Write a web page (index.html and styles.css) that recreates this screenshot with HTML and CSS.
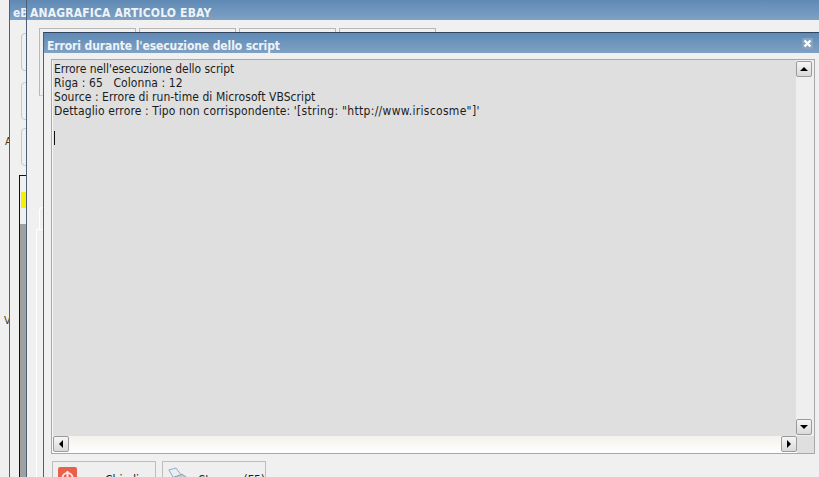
FILE: index.html
```html
<!DOCTYPE html>
<html lang="en">
<head>
    <meta charset="UTF-8">
    <title>Errori durante l'esecuzione dello script</title>
    <link rel="stylesheet" href="styles.css">
</head>
<body>
    <!-- etichette della finestra sotto, tagliate dalle altre -->
    <div class="back-label bl1">A</div>
    <div class="back-label bl2">V</div>

    <!-- finestra dietro -->
    <div class="window win-back">
        <div class="titlebar">eB</div>
        <div class="back-btn bb1"></div>
        <div class="back-btn bb2"></div>
        <div class="back-btn bb3"></div>
        <div class="back-grid">
            <div class="grid-row first"></div>
            <div class="grid-row yellow"></div>
            <div class="grid-row"></div>
        </div>
    </div>

    <!-- anagrafica -->
    <div class="window win-main">
        <div class="titlebar main-title">ANAGRAFICA ARTICOLO EBAY</div>
        <div class="tab t1"></div>
        <div class="tab t2"></div>
        <div class="tab t3"></div>
        <div class="tab t4"></div>
        <div class="panel-curve"></div>
        <div class="panel-line"></div>
    </div>

    <!-- dialogo errori -->
    <div class="window win-dialog">
        <div class="titlebar dialog-title">
            <span>Errori durante l'esecuzione dello script</span>
            <svg class="close" width="11" height="11" viewBox="0 0 11 11"><rect width="11" height="11" rx="1" fill="#86a3c2"/><path d="M2.5 2.5l6 6M8.5 2.5l-6 6" stroke="#fff" stroke-width="2.4"/></svg>
        </div>
        <div class="memo">
            <div class="memo-body">
                <div class="memo-text">
                    <p class="l1">Errore nell'esecuzione dello script</p>
                    <p class="l2">Riga : 65&nbsp;&nbsp; Colonna : 12</p>
                    <p class="l3">Source : Errore di run-time di Microsoft VBScript</p>
                    <p class="l4">Dettaglio errore : Tipo non corrispondente: <span class="l4-value">'[string: "http://www.iriscosme"]'</span></p>
                    <span class="caret"></span>
                </div>
                <div class="vscroll">
                    <div class="sbtn"><span class="arrow up"></span></div>
                    <div class="sbtn"><span class="arrow down"></span></div>
                </div>
            </div>
            <div class="hscroll">
                <div class="sbtn"><span class="arrow left"></span></div>
                <div class="sbtn"><span class="arrow right"></span></div>
                <div class="corner"></div>
            </div>
        </div>
        <div class="actions">
            <div class="action">
                <svg class="ico" width="20" height="20" viewBox="0 0 20 20"><rect width="19" height="20" rx="2" fill="#e8604c"/><circle cx="9.5" cy="11" r="5" fill="none" stroke="#fbe3df" stroke-width="2"/><path d="M9.5 4v6" stroke="#fbe3df" stroke-width="2"/></svg>
                <span class="lbl lbl-close">Chiudi</span>
            </div>
            <div class="action">
                <svg class="ico" width="24" height="20" viewBox="0 0 24 20"><path d="M1 2l8-2 6 8-9 3z" fill="#e6eff5" stroke="#8fa3b0"/><path d="M1 12l15-5 7 5v8H4z" fill="#c3ced3" stroke="#8a979e"/></svg>
                <span class="lbl lbl-print">Stampa (F5)</span>
            </div>
        </div>
    </div>
</body>
</html>
```

FILE: styles.css
```css
html, body {
    margin: 0;
    padding: 0;
    overflow: hidden;
}

body {
    width: 819px;
    height: 477px;
    position: relative;
    background-color: #f0f0f0;
    font-family: "DejaVu Sans", Arial, sans-serif;
    font-stretch: condensed;
    font-size: 12px;
    color: #1c1c1c;
}

.window {
    position: absolute;
    box-sizing: border-box;
    overflow: hidden;
    background-color: #f0f0f0;
    border-left: 1px solid #4d6078;
}

.titlebar {
    height: 20px;
    line-height: 26px;
    box-sizing: border-box;
    padding-left: 3px;
    background: linear-gradient(#5f8ab5, #7fa1c4);
    color: #eef3f8;
    font-weight: bold;
    font-size: 12px;
    white-space: nowrap;
    overflow: hidden;
}

.main-title {
    letter-spacing: 0.17px;
}

.win-back {
    left: 9px;
    top: 0;
    width: 30px;
    height: 477px;
}

.win-main {
    left: 26px;
    top: 0;
    width: 793px;
    height: 477px;
}

.win-dialog {
    left: 43px;
    top: 32px;
    width: 776px;
    height: 445px;
    border-top: 1px solid #2f4560;
}

.dialog-title {
    display: flex;
    justify-content: space-between;
    padding-right: 6px;
    letter-spacing: -0.1px;
}

.close {
    margin-top: 5px;
}

.back-btn {
    position: absolute;
    left: 11px;
    width: 20px;
    border: 1px solid #c8c8c8;
    border-radius: 4px;
}

.bb1 { top: 33px; height: 36px; }
.bb2 { top: 82px; height: 36px; }
.bb3 { top: 128px; height: 36px; }

.back-label {
    position: absolute;
    font-size: 11px;
    color: #4a3a2a;
}

.bl1 { left: 5px; top: 135px; }
.bl2 { left: 4px; top: 314px; }

.back-grid {
    position: absolute;
    left: 9px;
    top: 175px;
    width: 16px;
    height: 302px;
    border-left: 1px solid #111;
    border-top: 1px solid #111;
    background-color: #a0a0a0;
}

.grid-row {
    height: 16px;
    background-color: #f0f0f0;
}

.grid-row.yellow {
    background: linear-gradient(90deg, #f0f0f0 1px, #f7f000 1px);
}

.tab {
    position: absolute;
    top: 28px;
    height: 10px;
    border: 1px solid #b8b8b8;
    border-bottom: none;
    box-sizing: border-box;
}

.t1 { left: 12px; width: 97px; height: 68px; border-bottom: 1px solid #d0d0d0; }
.t2 { left: 112px; width: 97px; }
.t3 { left: 212px; width: 97px; }
.t4 { left: 312px; width: 97px; }

.panel-curve {
    position: absolute;
    left: 12px;
    top: 207px;
    width: 8px;
    height: 22px;
    border-left: 1px solid #fff;
    border-top: 1px solid #fff;
    border-top-left-radius: 4px;
}

.panel-line {
    position: absolute;
    left: 9px;
    top: 229px;
    width: 8px;
    height: 248px;
    border-left: 1px solid #fff;
    border-top: 1px solid #fff;
}

.memo {
    margin: 6px 0 0 7px;
    width: 764px;
    height: 395px;
    box-sizing: border-box;
    border: 1px solid #a8a8a8;
    display: flex;
    flex-direction: column;
}

.memo-body {
    flex: 1;
    display: flex;
    min-height: 0;
}

.memo-text {
    flex: 1;
    padding: 2px 0 0 1px;
    border-left: 1px solid #f8f8f8;
    background-color: #dfdfdf;
}

.memo-text p {
    margin: 0;
    height: 14px;
    line-height: 14px;
    white-space: nowrap;
}

/* Tahoma non c'e, si aggiusta riga per riga */
.memo-text .l1 { letter-spacing: -0.05px; }
.memo-text .l2 { letter-spacing: 0.08px; }
.memo-text .l3 { letter-spacing: 0.06px; }
.memo-text .l4 { letter-spacing: 0.13px; }
.memo-text .l4-value { letter-spacing: 0.3px; }

.caret {
    display: block;
    width: 1px;
    height: 14px;
    margin-top: 13px;
    background-color: #111;
}

.vscroll {
    width: 18px;
    padding: 1px 0;
    box-sizing: border-box;
    background-color: #efefef;
    display: flex;
    flex-direction: column;
    justify-content: space-between;
}

.hscroll {
    height: 17px;
    display: flex;
    background: linear-gradient(#f4f2ec, #ffffff);
    padding-left: 1px;
}

.corner {
    width: 17px;
    height: 17px;
    background-color: #dfdfdf;
}

.sbtn {
    width: 16px;
    height: 16px;
    box-sizing: border-box;
    border: 1px solid #9a9a9a;
    border-radius: 2px;
    background: linear-gradient(#f6f6f6, #d9d9d9);
    display: flex;
    align-items: center;
    justify-content: center;
}

.hscroll .sbtn:nth-child(2) {
    margin-left: auto;
}

.arrow {
    width: 0;
    height: 0;
    border-style: solid;
    border-color: transparent;
}

.arrow.up { border-width: 0 4px 4px; border-bottom-color: #000; }
.arrow.down { border-width: 4px 4px 0; border-top-color: #000; }
.arrow.left { border-width: 4px 4px 4px 0; border-right-color: #000; }
.arrow.right { border-width: 4px 0 4px 4px; border-left-color: #000; }

.actions {
    display: flex;
    gap: 6px;
    margin: 7px 0 0 8px;
}

.action {
    width: 104px;
    height: 40px;
    box-sizing: border-box;
    border: 1px solid #bdbdbd;
    display: flex;
    align-items: flex-start;
    padding: 5px 0 0 5px;
    background-color: #efefef;
}

.lbl {
    margin-top: 6px;
    white-space: nowrap;
}

.lbl-close { margin-left: 27px; }
.lbl-print { margin-left: 9px; }
```
